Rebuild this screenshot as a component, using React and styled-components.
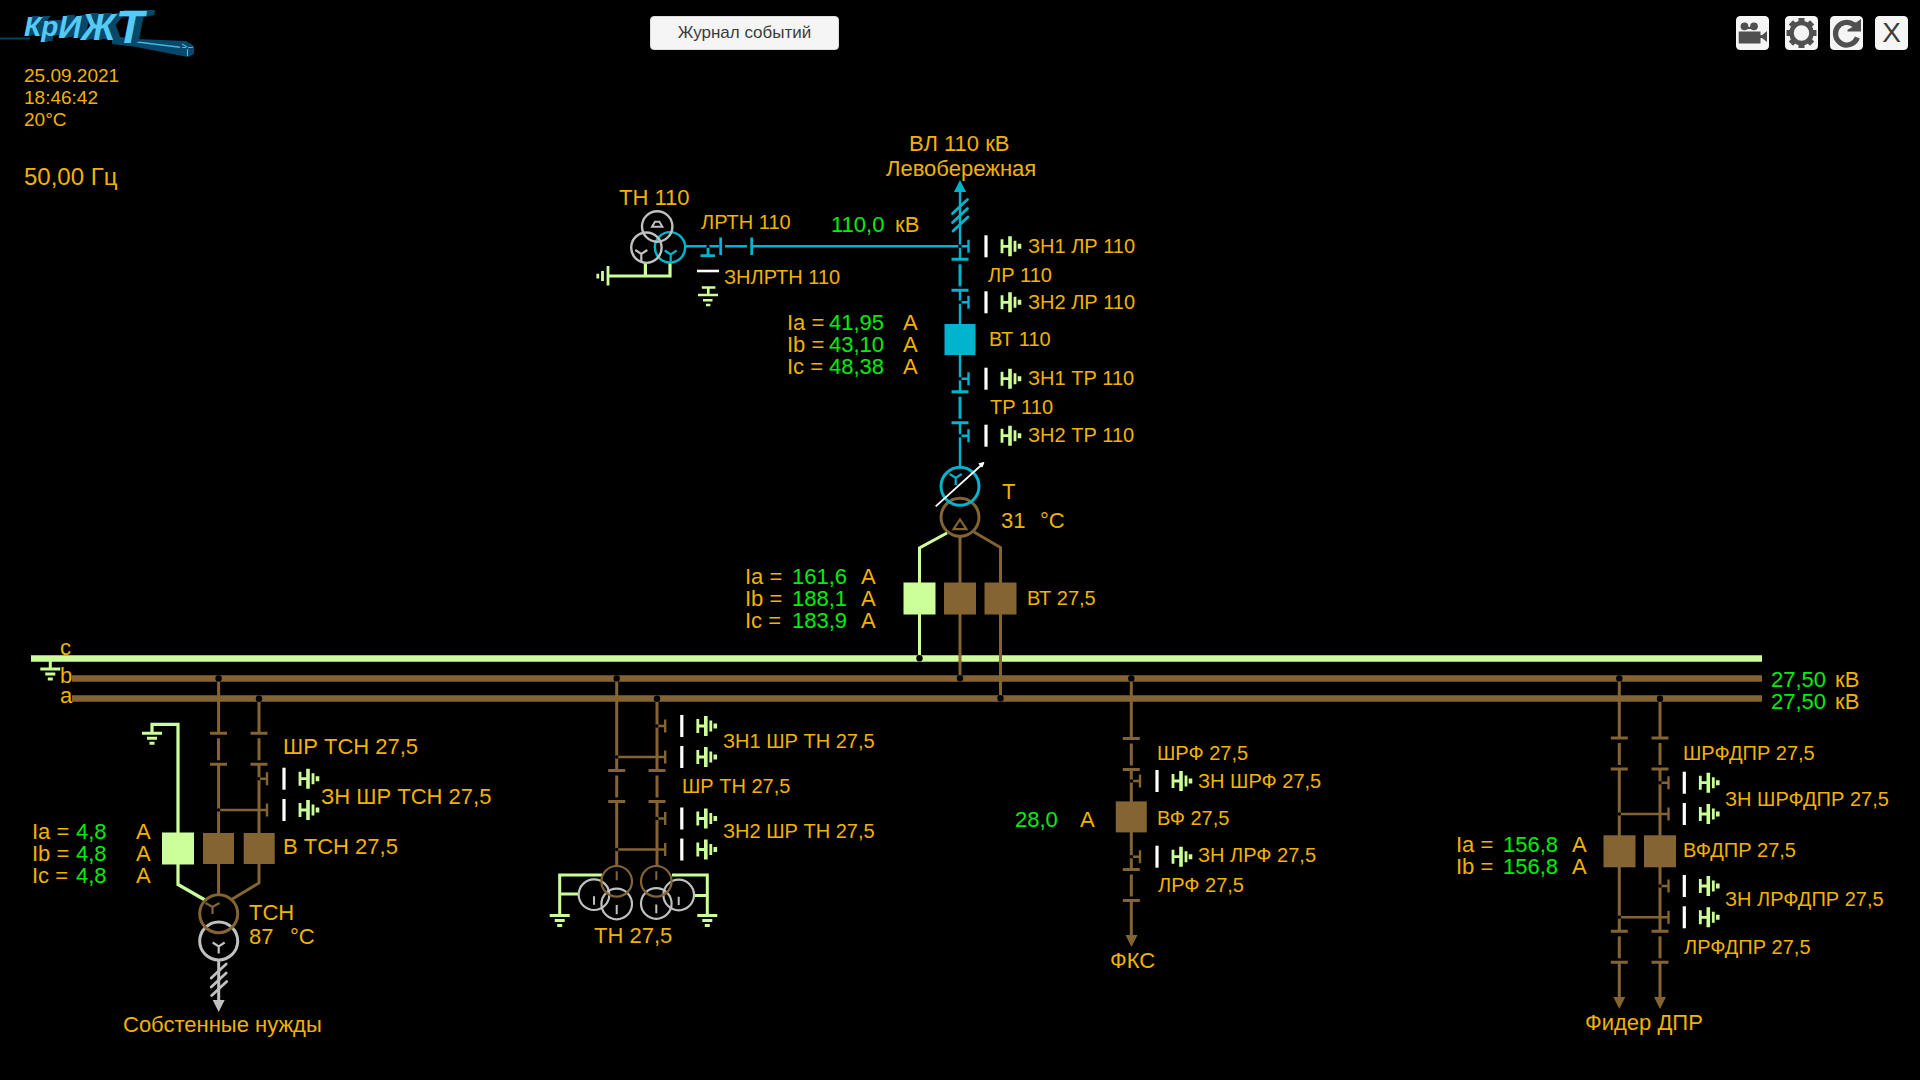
import React from "react";
import styled, { createGlobalStyle } from "styled-components";

const COLORS = {
  cyan: "#00b4cd",
  brown: "#836432",
  lime: "#ccff99",
  grey: "#c0c0c0",
  white: "#ffffff",
  amber: "#f2b200",
  value: "#00ee0c",
};

const HEADER_HEIGHT = 60;

const GlobalStyle = createGlobalStyle`
  body {
    margin: 0;
    background: #000;
    color: ${COLORS.amber};
    font-family: "Liberation Sans", Arial, sans-serif;
  }
`;

const Page = styled.div`
  min-height: 100vh;
  display: flex;
  flex-direction: column;
`;

const Header = styled.header`
  height: ${HEADER_HEIGHT}px;
  box-sizing: border-box;
  padding-right: 12px;
  display: flex;
  align-items: flex-start;
`;

const LogoBox = styled.div`
  position: relative;
  flex: 0 0 200px;
  margin-right: 450px;
`;

const Beam = styled.svg`
  position: absolute;
  left: 0;
  top: 0;
`;

const Wordmark = styled.div`
  position: relative;
  height: ${HEADER_HEIGHT}px;
  box-sizing: border-box;
  padding: 0 0 6px 24px;
  display: flex;
  align-items: center;
  color: #55caf5;
  font-weight: bold;
  font-style: italic;
  line-height: 1;
  white-space: nowrap;
  text-shadow: 1px 0 #07486b, 2px 0 #07486b, 3px 0 #07486b, 4px -1px #07486b,
    5px -1px #07486b, 6px -1px #07486b, 7px -1px #07486b, 8px -1px #07486b;
`;

const Letter = styled.span`
  font-size: ${(p) => p.$size}px;
`;

const Button = styled.button`
  height: 34px;
  margin-top: 16px;
  padding: 0;
  border: 1px solid #dcdcdc;
  border-radius: 4px;
  background: #f5f5f5;
  color: #3c3c3c;
  font-family: inherit;
  cursor: pointer;
`;

const JournalButton = styled(Button)`
  width: 189px;
  font-size: 17px;
`;

const Tools = styled.nav`
  margin-left: auto;
  display: flex;
  gap: 12px;
`;

const IconButton = styled(Button)`
  width: 33px;
  border-color: #f5f5f5;
  display: flex;
  align-items: center;
  justify-content: center;
  font-size: 28px;
  line-height: 32px;
  &:first-child {
    margin-right: 4px;
  }
  svg {
    flex: none;
  }
`;

const Stage = styled.main`
  flex: 1;
  display: grid;
  overflow: hidden;
`;

const Status = styled.section`
  grid-area: 1 / 1;
  z-index: 1;
  justify-self: start;
  align-self: start;
  padding: 5px 24px;
`;

const StatusLine = styled.div`
  font-size: 19px;
  line-height: 22px;
`;

const Frequency = styled.div`
  margin-top: 32px;
  font-size: 24px;
  line-height: 28px;
`;

const Board = styled.section`
  grid-area: 1 / 1;
  position: relative;
`;

const Drawing = styled.svg`
  display: block;
`;

const Label = styled.span`
  position: absolute;
  left: ${(p) => p.$x}px;
  top: ${(p) => p.$y - HEADER_HEIGHT}px;
  font-size: ${(p) => (p.$large ? 22 : 20)}px;
  line-height: ${(p) => (p.$large ? 26 : 24)}px;
  white-space: pre;
  color: ${(p) => (p.$value ? COLORS.value : COLORS.amber)};
`;

const ReadingTable = styled.table`
  position: absolute;
  left: ${(p) => p.$x}px;
  top: ${(p) => p.$y - HEADER_HEIGHT}px;
  border-collapse: collapse;
  table-layout: fixed;
  width: ${(p) => p.$width}px;
  font-size: 22px;
  line-height: 22px;
  th,
  td {
    padding: 0;
    font-weight: normal;
    text-align: left;
    white-space: nowrap;
  }
`;

const NameCell = styled.th`
  width: ${(p) => p.$width}px;
`;

const ValueCell = styled.td`
  color: ${COLORS.value};
  width: ${(p) => p.$width}px;
`;

function Readings({ x, y, nameWidth, valueWidth, unit, rows }) {
  return (
    <ReadingTable $x={x} $y={y} $width={nameWidth + valueWidth + 28}>
      <tbody>
        {rows.map(([name, value], i) => (
          <tr key={i}>
            {name && (
              <NameCell scope="row" $width={nameWidth}>
                {name} =
              </NameCell>
            )}
            <ValueCell $width={valueWidth}>{value}</ValueCell>
            <td>{unit}</td>
          </tr>
        ))}
      </tbody>
    </ReadingTable>
  );
}

const LABELS = [
  [886, 156, "Левобережная", 1],
  [909, 131, "ВЛ 110 кВ", 1],
  [619, 185, "ТН 110", 1],
  [701, 210, "ЛРТН 110"],
  [895, 212, "кВ", 1],
  [724, 265, "ЗНЛРТН 110"],
  [1028, 234, "ЗН1 ЛР 110"],
  [988, 263, "ЛР 110"],
  [1028, 290, "ЗН2 ЛР 110"],
  [989, 327, "ВТ 110"],
  [1028, 366, "ЗН1 ТР 110"],
  [990, 395, "ТР 110"],
  [1028, 423, "ЗН2 ТР 110"],
  [1002, 479, "Т", 1],
  [1001, 508, "31", 1],
  [1040, 508, "°C", 1],
  [1027, 586, "ВТ 27,5"],
  [60, 635, "c", 1],
  [60, 663, "b", 1],
  [60, 683, "a", 1],
  [283, 734, "ШР ТСН 27,5", 1],
  [321, 784, "ЗН ШР ТСН 27,5", 1],
  [283, 834, "В ТСН 27,5", 1],
  [249, 900, "ТСН", 1],
  [249, 924, "87", 1],
  [290, 924, "°C", 1],
  [123, 1012, "Собстенные нужды", 1],
  [723, 729, "ЗН1 ШР ТН 27,5"],
  [682, 774, "ШР ТН 27,5"],
  [723, 819, "ЗН2 ШР ТН 27,5"],
  [594, 923, "ТН 27,5", 1],
  [1157, 741, "ШРФ 27,5"],
  [1198, 769, "ЗН ШРФ 27,5"],
  [1157, 806, "ВФ 27,5"],
  [1080, 807, "А", 1],
  [1198, 843, "ЗН ЛРФ 27,5"],
  [1158, 873, "ЛРФ 27,5"],
  [1110, 948, "ФКС", 1],
  [1683, 741, "ШРФДПР 27,5"],
  [1725, 787, "ЗН ШРФДПР 27,5"],
  [1683, 838, "ВФДПР 27,5"],
  [1725, 887, "ЗН ЛРФДПР 27,5"],
  [1684, 935, "ЛРФДПР 27,5"],
  [1585, 1010, "Фидер ДПР", 1],
];

/* ---------- drawing primitives ---------- */

const Wire = ({ d, c = COLORS.brown, w = 3 }) => (
  <path d={d} stroke={c} strokeWidth={w} fill="none" />
);

const Breaker = ({ x, y, c = COLORS.brown, s = 32 }) => (
  <rect x={x - s / 2} y={y} width={s} height={s} fill={c} />
);

const Node = ({ x, y, r = 3.2 }) => <circle cx={x} cy={y} r={r} fill="#000" />;

const Coil = ({ x, y, r = 19, c = COLORS.brown, w = 3 }) => (
  <circle cx={x} cy={y} r={r} fill="none" stroke={c} strokeWidth={w} />
);

/* Vertical disconnector: upper contact, blade, lower contact */
const Disconnector = ({ x, y, c = COLORS.brown }) => (
  <g stroke={c} strokeWidth="3">
    <path d={`M${x - 8.5} ${y}h17M${x - 8.5} ${y + 31}h17`} />
    <path d={`M${x} ${y + 5}v22`} />
  </g>
);

/* Side contact of an earthing switch */
const Stub = ({ x, y, from, c = COLORS.brown }) => (
  <g>
    <Wire d={`M${from ?? x} ${y}H${x + 8}M${x + 8.5} ${y - 6.5}v13`} c={c} w={2.4} />
    <Node x={from ?? x} y={y} r={1.8} />
  </g>
);

/* Open earthing blade with its ground sign, drawn to the right of x */
const Earthing = ({ x, y }) => (
  <g>
    <path d={`M${x} ${y - 11}v22`} stroke={COLORS.white} strokeWidth="3.2" />
    <g stroke={COLORS.lime}>
      <path d={`M${x + 16} ${y - 7}v14M${x + 16} ${y}h8M${x + 29} ${y - 5.5}v11`} strokeWidth="2.8" />
      <path d={`M${x + 24} ${y - 10}v20M${x + 33.5} ${y - 2.5}v5`} strokeWidth="3.6" />
    </g>
  </g>
);

const Ground = ({ x, y }) => (
  <path
    d={`M${x - 10} ${y}h20M${x - 5} ${y + 5}h10M${x - 2.5} ${y + 10}h5`}
    stroke={COLORS.lime}
    strokeWidth="3"
  />
);

const Arrow = ({ x, y, c = COLORS.brown, up }) => (
  <path d={up ? `M${x} ${y - 12}l6 12h-12z` : `M${x} ${y + 12}l6-12h-12z`} fill={c} />
);

const Star = ({ x, y, c, s = 6 }) => (
  <path
    d={`M${x - s} ${y - 4}L${x} ${y}L${x + s} ${y - 4}M${x} ${y}v7`}
    stroke={c}
    strokeWidth="2.2"
    fill="none"
  />
);

const Slashes = ({ x, y, c }) => (
  <path
    d={`M${x - 7.5} ${y}l15-14M${x - 7.5} ${y + 9}l15-14M${x - 7} ${y + 17.5}l15-14`}
    stroke={c}
    strokeWidth="2.8"
    strokeLinecap="round"
  />
);

/* ---------- feeders ---------- */

const Buses = () => (
  <g strokeWidth="6.4">
    <path d="M31 658.5H1762" stroke={COLORS.lime} />
    <path d="M72 678.5H1762M72 698.5H1762" stroke={COLORS.brown} />
    <path d="M50.3 661v7" stroke={COLORS.lime} strokeWidth="3" />
    <Ground x={50.3} y={669} />
  </g>
);

const Line110 = () => {
  const c = COLORS.cyan;
  return (
    <g>
      <Arrow x={960} y={192} c={c} up />
      <Wire
        d="M960 191V259M960 291V324M960 355V391M960 423V467"
        c={c}
        w={2.4}
      />
      <Slashes x={960} y={213.5} c={c} />
      <Wire d="M686 246.3H719M725 246.3H747M752 246.3H960" c={c} w={2.6} />
      <Wire d="M720.7 237.5v17.5M751.7 237.5v17.5M708 248v7M700.5 255.6h14.5" c={c} w={2.8} />
      <Disconnector x={960} y={259.3} c={c} />
      <Disconnector x={960} y={391.7} c={c} />
      <Stub x={960} y={246.3} c={c} />
      <Stub x={960} y={302.3} c={c} />
      <Stub x={960} y={378.7} c={c} />
      <Stub x={960} y={435.7} c={c} />
      <Node x={708} y={246.3} r={1.6} />
      <Breaker x={960} y={324} c={c} s={31} />
      {[246.3, 302.3, 378.7, 435.7].map((y) => (
        <Earthing key={y} x={986} y={y} />
      ))}
      <path d="M697 271h22" stroke="#fff" strokeWidth="2.6" />
      <path
        d="M701.8 287.5h13.6M708.3 287.5v8M698 295h20M703 300.3h9.5M706 305h4.4"
        stroke={COLORS.lime}
        strokeWidth="2.6"
      />
    </g>
  );
};

const VoltageTransformer110 = () => (
  <g>
    <Wire d="M645.4 262V276M670 262V277.5M608 276H670" c={COLORS.lime} w={3.2} />
    <path d="M608 266v19.4M602.5 271v10M597.8 273.7v4.8" stroke={COLORS.lime} strokeWidth="2.8" />
    <Coil x={670} y={247.3} r={15.2} c={COLORS.cyan} w={2.4} />
    <Coil x={646.4} y={247.7} r={15.2} c={COLORS.grey} w={2.4} />
    <Coil x={657.2} y={226.5} r={15.2} c={COLORS.grey} w={2.4} />
    <path d="M655 221.8h4.4l3 5h-10.4z" stroke={COLORS.grey} strokeWidth="2" fill="none" />
    <Star x={641.3} y={254} c={COLORS.grey} />
    <Star x={670.7} y={254.5} c={COLORS.cyan} />
  </g>
);

const MainTransformer = () => (
  <g>
    <Coil x={960} y={517.3} />
    <Coil x={960} y={486.3} c={COLORS.cyan} />
    <Star x={955.7} y={478} c={COLORS.cyan} />
    <path d="M960 519.5l6.4 9.7h-12.8z" stroke={COLORS.brown} strokeWidth="2.2" fill="none" />
    <path d="M935.7 506.3L982 464.5" stroke="#fff" strokeWidth="1.8" />
    <path d="M984 462.5l-2 4.6-3-3.4z" fill="#fff" stroke="#fff" />
    <Wire d="M947 533L919.5 548V658" c={COLORS.lime} />
    <Wire d="M974 532L1000.5 547.5V698M960 536V678" c={COLORS.brown} />
    <Breaker x={919.5} y={582.5} c={COLORS.lime} />
    <Breaker x={960} y={582.5} />
    <Breaker x={1000.5} y={582.5} />
    <Node x={919.5} y={658.3} />
    <Node x={960} y={678.3} />
    <Node x={1000.5} y={698.3} />
  </g>
);

const OwnNeeds = () => (
  <g>
    <Wire d="M152 733V724.3H178V884.5L205 900" c={COLORS.lime} w={3.2} />
    <Ground x={152} y={733.2} />
    <Wire d="M218.6 678V733M218.6 765V894M259 698V733M259 765V883L231.5 899.5" />
    <Disconnector x={218.5} y={733.3} />
    <Disconnector x={259} y={733.3} />
    <Stub x={258.5} y={778.7} />
    <Stub x={258.5} y={810} from={218.6} />
    <Earthing x={284} y={778.7} />
    <Earthing x={284} y={810} />
    <Breaker x={178} y={832.5} c={COLORS.lime} />
    <Breaker x={218.5} y={833} s={31} />
    <Breaker x={259.2} y={833} s={31} />
    <Node x={218.6} y={678.5} />
    <Node x={259} y={698.7} />
    <Wire d="M218.7 960V1002" c={COLORS.grey} />
    <Coil x={218.7} y={941} c={COLORS.grey} />
    <Coil x={218.7} y={913.7} />
    <Star x={212.5} y={907} c={COLORS.brown} s={7} />
    <Star x={218.7} y={946.5} c={COLORS.grey} />
    <Slashes x={218.7} y={978} c={COLORS.grey} />
    <Arrow x={218.7} y={1000} c={COLORS.grey} />
  </g>
);

const VoltageTransformer27 = () => (
  <g>
    <Wire d="M616.7 678V770M616.7 802V866M657 698V770M657 802V866" />
    <Disconnector x={616.7} y={770.5} />
    <Disconnector x={657} y={770.5} />
    <Stub x={656.7} y={726} />
    <Stub x={656.7} y={757} from={616.7} />
    <Stub x={656.7} y={818.5} />
    <Stub x={656.7} y={849.5} from={616.7} />
    {[726, 757, 818.5, 849.5].map((y) => (
      <Earthing key={y} x={681.8} y={y} />
    ))}
    <Node x={616.7} y={678.4} />
    <Node x={657} y={698.7} />
    <Wire d="M602 875H559.7V916M559.7 894H578.5M672 875H707.3V916M707.3 895.6H694" c={COLORS.lime} />
    <Ground x={559.7} y={915.5} />
    <Ground x={707.3} y={915.5} />
    {[
      [594, 894.7],
      [678.7, 895],
      [616.7, 904],
      [656.3, 903.5],
    ].map(([x, y]) => (
      <Coil key={x} x={x} y={y} r={15.3} c={COLORS.grey} w={2.2} />
    ))}
    <Coil x={616.7} y={881.3} r={15.3} w={2.2} />
    <Coil x={656.3} y={881.3} r={15.3} w={2.2} />
    <Wire d="M616.7 871.3v9M656.3 871.3v8.5" w={2} />
    <Wire d="M594 896.3v8.5M616.7 905v9.3M656.3 904.5v8.7M678.7 896.7v8.3" c={COLORS.grey} w={2} />
  </g>
);

const FeederFks = () => (
  <g>
    <Wire d="M1131.3 678V738M1131.3 770V869M1131.3 901V936" />
    <Disconnector x={1131.3} y={738.5} />
    <Disconnector x={1131.3} y={869.5} />
    <Stub x={1131.5} y={781} />
    <Stub x={1131.5} y={856.7} />
    <Earthing x={1157} y={781} />
    <Earthing x={1157} y={856.7} />
    <Breaker x={1131.3} y={801.4} s={31} />
    <Node x={1131.3} y={678.4} />
    <Arrow x={1131.5} y={935} />
  </g>
);

const FeederDpr = () => (
  <g>
    {[
      [1619.3, 678.4],
      [1660, 698.7],
    ].map(([x, y]) => (
      <g key={x}>
        <Wire d={`M${x} ${y}V737M${x} 770V930M${x} 963V998`} />
        <Disconnector x={x} y={738} />
        <Disconnector x={x} y={931.3} />
        <Node x={x} y={y} />
        <Arrow x={x} y={997} />
      </g>
    ))}
    <Stub x={1660} y={782.7} />
    <Stub x={1660} y={814} from={1619.3} />
    <Stub x={1660} y={886} />
    <Stub x={1660} y={917.3} from={1619.3} />
    {[782.7, 814, 886, 917.3].map((y) => (
      <Earthing key={y} x={1684.3} y={y} />
    ))}
    <Breaker x={1619.5} y={835.3} />
    <Breaker x={1660} y={835.3} />
  </g>
);

/* ---------- header graphics ---------- */

const LETTERS = [
  ["К", 28],
  ["р", 28],
  ["И", 32],
  ["Ж", 37],
  ["Т", 46],
];

const Logo = () => (
  <LogoBox>
    <Beam width="200" height="60" viewBox="0 0 200 60" aria-hidden="true">
      <path d="M0 38.5H30" stroke="#06405e" strokeWidth="2" />
      <path d="M112 36L137 39L186 41L194 46V54L188 57L136 47L112 44z" fill="#07486b" />
      <path d="M137 42L180 47.3" stroke="#46b4dc" strokeWidth="1.6" />
      <path d="M182 47.5h4M188 47.5h5M187.5 49v7M182 44l5 3" stroke="#46b4dc" strokeWidth="1.2" />
    </Beam>
    <Wordmark>
      {LETTERS.map(([ch, size]) => (
        <Letter key={ch} $size={size}>
          {ch}
        </Letter>
      ))}
    </Wordmark>
  </LogoBox>
);

const CameraIcon = () => (
  <svg width="33" height="34" viewBox="0 0 33 34" fill="#505050">
    <circle cx="8.5" cy="10.3" r="3.9" />
    <circle cx="18" cy="10.3" r="3.9" />
    <path d="M10 11h8v2h-8zM2.7 15.5h21.8v3.5h1.5l5-4v11l-5-4h-1.5v5.5H2.7z" />
  </svg>
);

const GearIcon = () => (
  <svg width="33" height="34" viewBox="0 0 33 34" fill="#505050" stroke="#505050">
    <circle cx="16.5" cy="17" r="10" fill="none" strokeWidth="4.6" />
    {[0, 45, 90, 135, 180, 225, 270, 315].map((a) => (
      <rect key={a} x="13.5" y="2" width="6" height="5" stroke="none" transform={`rotate(${a} 16.5 17)`} />
    ))}
  </svg>
);

const ReloadIcon = () => (
  <svg width="33" height="34" viewBox="0 0 33 34">
    <path d="M24 9A11.3 11.3 0 1 0 27.4 21.5" fill="none" stroke="#505050" strokeWidth="5.2" />
    <path d="M31 3V15.5H17.5V13.8L22.5 11L21 6L26 6.5z" fill="#505050" />
  </svg>
);

export default function App() {
  return (
    <Page>
      <GlobalStyle />
      <Header>
        <Logo />
        <JournalButton type="button">Журнал событий</JournalButton>
        <Tools>
          <IconButton type="button" aria-label="Видео">
            <CameraIcon />
          </IconButton>
          <IconButton type="button" aria-label="Настройки">
            <GearIcon />
          </IconButton>
          <IconButton type="button" aria-label="Обновить">
            <ReloadIcon />
          </IconButton>
          <IconButton type="button">X</IconButton>
        </Tools>
      </Header>
      <Stage>
        <Status>
          <StatusLine>25.09.2021</StatusLine>
          <StatusLine>18:46:42</StatusLine>
          <StatusLine>20°C</StatusLine>
          <Frequency>50,00 Гц</Frequency>
        </Status>
        <Board>
          <Drawing width="1920" height="1020" viewBox="0 60 1920 1020" aria-hidden="true">
            <Buses />
            <Line110 />
            <VoltageTransformer110 />
            <MainTransformer />
            <OwnNeeds />
            <VoltageTransformer27 />
            <FeederFks />
            <FeederDpr />
          </Drawing>
          {LABELS.map(([x, y, text, large]) => (
            <Label key={`${x}-${y}`} $x={x} $y={y} $large={large}>
              {text}
            </Label>
          ))}
          <Label $x={831} $y={212} $large $value>
            110,0
          </Label>
          <Label $x={1015} $y={807} $large $value>
            28,0
          </Label>
          <Readings
            x={787} y={312} nameWidth={42} valueWidth={74} unit="А"
            rows={[["Ia", "41,95"], ["Ib", "43,10"], ["Ic", "48,38"]]}
          />
          <Readings
            x={745} y={566} nameWidth={47} valueWidth={69} unit="А"
            rows={[["Ia", "161,6"], ["Ib", "188,1"], ["Ic", "183,9"]]}
          />
          <Readings
            x={32} y={821} nameWidth={44} valueWidth={60} unit="А"
            rows={[["Ia", "4,8"], ["Ib", "4,8"], ["Ic", "4,8"]]}
          />
          <Readings
            x={1456} y={834} nameWidth={47} valueWidth={69} unit="А"
            rows={[["Ia", "156,8"], ["Ib", "156,8"]]}
          />
          <Readings
            x={1771} y={669} nameWidth={0} valueWidth={64} unit="кВ"
            rows={[["", "27,50"], ["", "27,50"]]}
          />
        </Board>
      </Stage>
    </Page>
  );
}
